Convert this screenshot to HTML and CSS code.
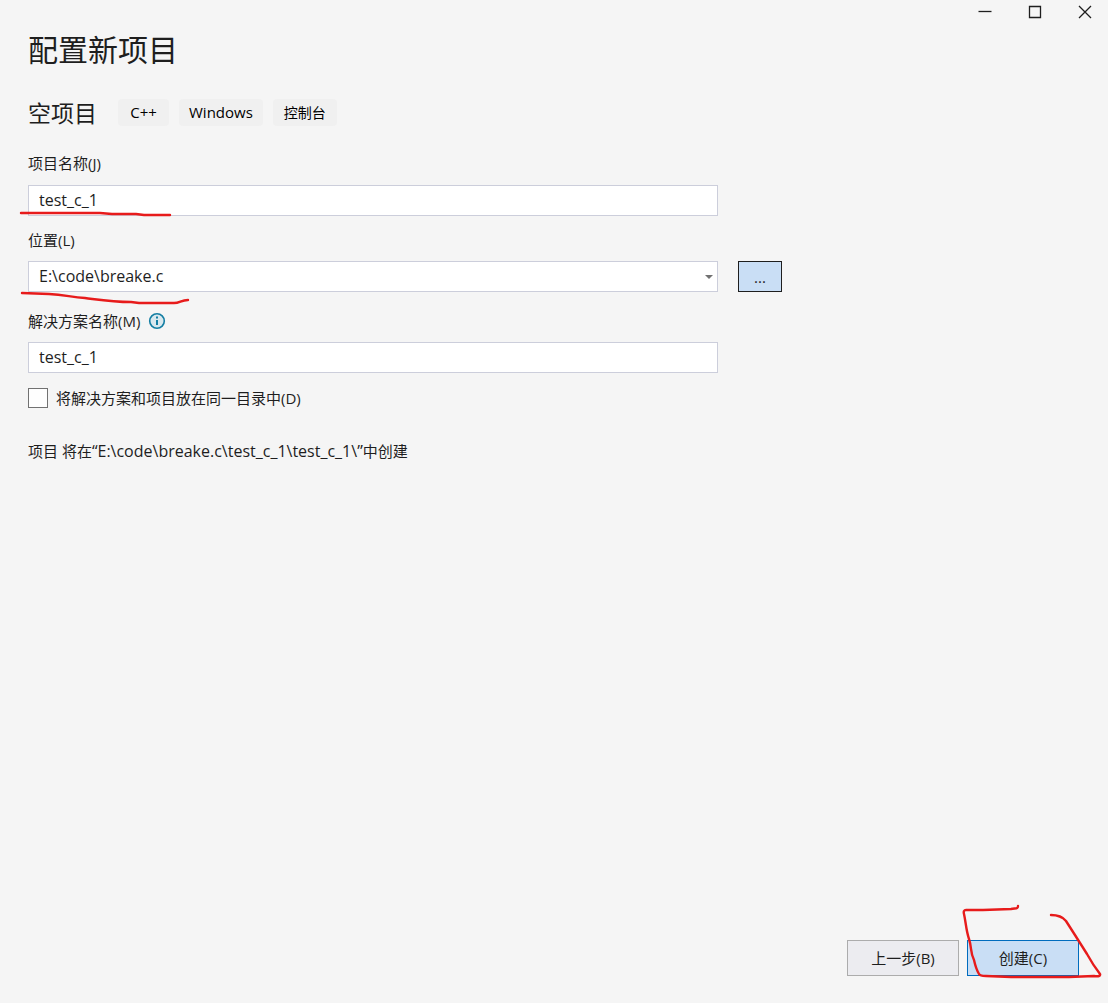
FILE: index.html
```html
<!DOCTYPE html>
<html lang="zh-CN">
<head>
<meta charset="utf-8">
<title>配置新项目</title>
<link rel="stylesheet" href="styles.css">
</head>
<body>
<div class="window">
  <header class="titlebar">
    <button class="caption" type="button" aria-label="最小化"><svg width="14" height="14" viewBox="0 0 14 14"><path d="M.5 6.5h13"/></svg></button>
    <button class="caption" type="button" aria-label="最大化"><svg width="14" height="14" viewBox="0 0 14 14"><path d="M1.5 1.5h11v11h-11z"/></svg></button>
    <button class="caption" type="button" aria-label="关闭"><svg width="14" height="14" viewBox="0 0 14 14"><path d="M1 1l12 12M13 1L1 13"/></svg></button>
  </header>
  <main class="content">
    <h1 class="title">配置新项目</h1>
    <div class="template">
      <h2 class="template-name">空项目</h2>
      <ul class="tags"><li class="tag latin">C++</li><li class="tag latin">Windows</li><li class="tag">控制台</li></ul>
    </div>
    <form class="form" id="project">
      <div class="field">
        <label class="label" for="name">项目名称(J)</label>
        <div class="control">
          <input class="box" id="name" type="text" value="test_c_1">
          <svg class="mark mark-name" width="156" height="10" viewBox="0 0 156 10"><path d="M3 5H82L94 6H118L126 7H152"/></svg>
        </div>
      </div>
      <div class="field">
        <label class="label" for="location">位置(L)</label>
        <div class="row">
          <div class="control">
            <select class="box" id="location"><option>E:\code\breake.c</option></select>
            <svg class="arrow" width="8" height="4" viewBox="0 0 8 4"><path d="M0 0h8L4 4z"/></svg>
            <svg class="mark mark-location" width="174" height="18" viewBox="0 0 174 18"><path d="M3 4L30 5C46 6 52 8 66 9C82 11 94 13 112 13L120 14H155C161 14 162 11 169 11"/></svg>
          </div>
          <button class="browse" type="button">...</button>
        </div>
      </div>
      <div class="field">
        <div class="label-row">
          <label class="label" for="solution">解决方案名称(M)</label>
          <svg class="info" width="18" height="18" viewBox="0 0 18 18"><circle cx="9" cy="9" r="7.3"/><path d="M9 8v5M9 4.500v2"/></svg>
        </div>
        <div class="control"><input class="box" id="solution" type="text" value="test_c_1"></div>
      </div>
      <label class="check"><input class="tick" type="checkbox"><span>将解决方案和项目放在同一目录中(D)</span></label>
      <p class="summary">项目 将在<span class="path">“E:\code\breake.c\test_c_1\test_c_1\”</span>中创建</p>
    </form>
  </main>
  <footer class="footer">
    <button class="action" type="button">上一步(B)</button>
    <div class="primary-wrap">
      <button class="action primary" type="submit" form="project">创建(C)</button>
      <svg class="mark mark-create" width="144" height="80" viewBox="0 0 144 80"><path d="M57 5C57 8 55 7 50 8L22 9L5 9Q2 9 3 13C5 22 5 29 8 38C11 47 9 51 13 59Q15 68 18 73Q19 75 25 75L50 76H108L133 75Q140 76 139 73Q132 64 126 53Q114 34 105 20C101 15 96 14 90 14"/></svg>
    </div>
  </footer>
</div>
</body>
</html>
```

FILE: styles.css
```css
* { box-sizing: border-box; }
body {
  margin: 0;
  background: #f5f5f5;
  color: #1e1e1e;
  font: 15px/20px "Open Sans", "Noto Sans CJK SC", sans-serif;
}
button, input, select { font: inherit; color: inherit; }
.window { min-height: 100vh; display: flex; flex-direction: column; }
.titlebar { display: flex; justify-content: flex-end; gap: 4px; height: 24px; }
.caption {
  width: 46px;
  padding: 0;
  border: 0;
  background: transparent;
  display: flex;
  align-items: center;
  justify-content: center;
}
.caption path { fill: none; stroke: #1e1e1e; stroke-width: 1.3; }
.content { flex: 1; padding: 2px 28px 0; }
.title, .template-name {
  margin: 0;
  font-family: "Noto Sans CJK SC", sans-serif;
  font-weight: 400;
}
.title { font-size: 30px; line-height: 44px; }
.template { display: flex; align-items: center; gap: 21px; margin-top: 24px; height: 36px; }
.template-name { font-size: 23px; line-height: 36px; }
.tags { display: flex; gap: 10px; margin: 0; padding: 0; list-style: none; }
.tag {
  min-width: 51px;
  padding: 4px 11px;
  border-radius: 4px;
  background: #f0f0f0;
  color: #000;
  font-size: 14px;
  line-height: 19px;
  text-align: center;
}
.tag.latin { padding: 4px 10px; font-size: 15px; }
.form { margin-top: 23px; }
.field { margin-bottom: 14px; }
.label { display: block; }
.label-row { display: flex; align-items: center; gap: 8px; padding-top: 5px; }
.row { display: flex; gap: 20px; }
.control { position: relative; width: 690px; margin-top: 12px; }
.row .control, .label-row + .control { margin-top: 11px; }
.box {
  display: block;
  width: 100%;
  height: 31px;
  padding: 0 10px 1px;
  border: 1px solid #cccedb;
  border-radius: 0;
  background: #fff;
  font-size: 16px;
  appearance: none;
}
.arrow { position: absolute; right: 5px; top: 14px; fill: #717171; pointer-events: none; }
.browse { width: 44px; height: 31px; margin-top: 11px; padding: 0; border: 1px solid #1e1e1e; background: #c9def5; }
.info circle { fill: #d9e8ee; stroke: #147ea3; stroke-width: 1.6; }
.info path { stroke: #147ea3; stroke-width: 2; }
.check { display: flex; align-items: center; gap: 8px; width: max-content; margin-top: 15px; }
.tick { appearance: none; width: 20px; height: 20px; margin: 0; border: 1px solid #717171; background: #fefefe; }
.summary { margin: 33px 0 0; }
.path { font-size: 16px; }
.footer { display: flex; justify-content: flex-end; gap: 8px; padding: 0 29px 27px; }
.primary-wrap { position: relative; }
.action { width: 112px; height: 36px; padding: 0; border: 1px solid #acacac; background: #ececf0; }
.primary { border-color: #006cbe; background: #c9def5; }
.mark { position: absolute; fill: none; stroke: #e71b1b; stroke-width: 2.400; stroke-linecap: round; stroke-linejoin: round; pointer-events: none; }
.mark-name { left: -10px; top: 23px; }
.mark-location { left: -9px; top: 28px; }
.mark-create { left: -6px; top: -39px; }
```
